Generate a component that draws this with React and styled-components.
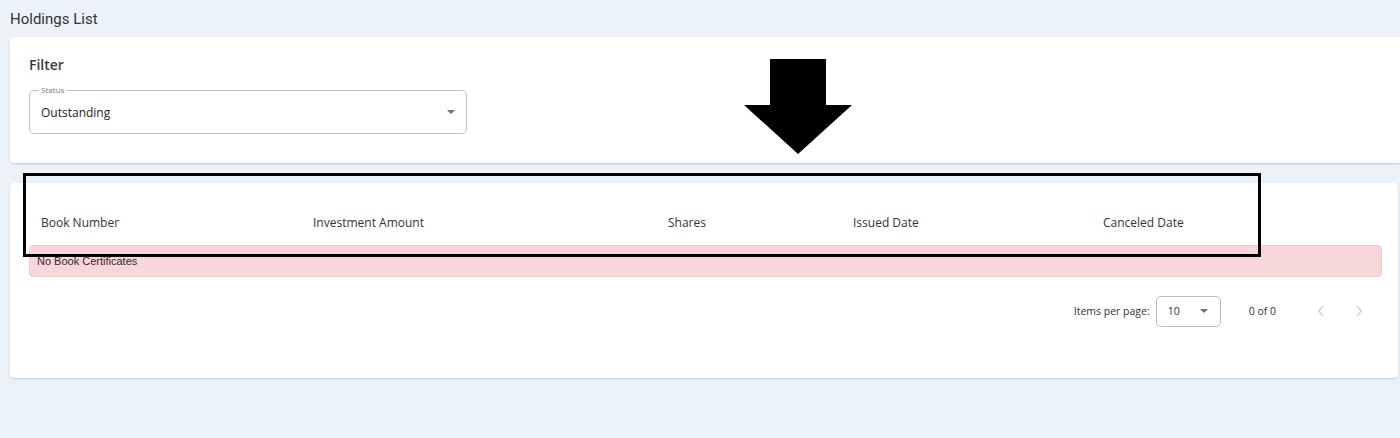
import React from "react";
import styled, { createGlobalStyle } from "styled-components";

const Global = createGlobalStyle`
  html, body { margin: 0; padding: 0; }
  body {
    background: #ecf3f8;
    font-family: "Open Sans", "Liberation Sans", sans-serif;
    color: #333;
  }
`;

const Page = styled.div`
  position: relative;
  width: 1400px;
  height: 438px;
  overflow: hidden;
  padding: 9px 2px 0 10px;
  box-sizing: border-box;
  display: flex;
  flex-direction: column;
`;

const PageTitle = styled.h1`
  margin: 0;
  font-family: Roboto, "Liberation Sans", sans-serif;
  font-weight: 400;
  font-size: 15px;
  line-height: 20px;
  color: #333;
  height: 28px;
`;

const Card = styled.section`
  background: #fff;
  border-radius: 4px;
  box-shadow: 0 1px 2px rgba(0, 0, 0, 0.18);
  padding: ${(p) => p.$pad};
  margin-bottom: 20px;
  margin-right: ${(p) => p.$mr || "0"};
  box-sizing: border-box;
  height: ${(p) => p.$h};
`;

const CardTitle = styled.h2`
  margin: 0 0 15px;
  font-size: 14px;
  font-weight: 600;
  line-height: 20px;
  color: #3a3a3a;
`;

const Field = styled.div`
  position: relative;
  width: 438px;
  height: 44px;
  border: 1px solid #bdbdbd;
  border-radius: 5px;
  box-sizing: border-box;
  display: flex;
  align-items: center;
  padding: 0 11px;
  justify-content: space-between;
`;

const FieldLabel = styled.span`
  position: absolute;
  top: -6px;
  left: 8px;
  padding: 0 3px;
  background: #fff;
  font-size: 8px;
  line-height: 10px;
  color: #777;
`;

const FieldValue = styled.span`
  font-size: 12px;
  color: #222;
  padding-top: 1px;
`;

const Caret = styled.span`
  width: 0;
  height: 0;
  border-left: 4px solid transparent;
  border-right: 4px solid transparent;
  border-top: 4px solid #707070;
`;

const cols = "272px 355px 185px 250px 1fr";

const HeaderRow = styled.div`
  display: grid;
  grid-template-columns: ${cols};
  height: 46px;
  align-items: center;
  padding-left: 12px;
`;

const HeaderCell = styled.div`
  font-size: 12px;
  color: #333;
`;

const Alert = styled.div`
  height: 32px;
  box-sizing: border-box;
  background: #f8d7da;
  border: 1px solid #f1c7cc;
  border-radius: 4px;
  display: flex;
  align-items: center;
  padding-left: 7px;
  font-family: "Liberation Sans", Arial, sans-serif;
  font-size: 11px;
  color: #3a2326;
`;

const Paginator = styled.div`
  height: 68px;
  display: flex;
  align-items: center;
  justify-content: flex-end;
  padding-right: 4px;
  font-size: 10.5px;
  color: #333;
`;

const PageSize = styled.div`
  width: 65px;
  height: 31px;
  box-sizing: border-box;
  border: 1px solid #bdbdbd;
  border-radius: 5px;
  margin: 0 28px 0 6px;
  display: flex;
  align-items: center;
  justify-content: space-between;
  padding: 0 12px 0 11px;
`;

const Range = styled.span`
  margin-right: 26px;
`;

const NavBtn = styled.button`
  border: 0;
  background: transparent;
  padding: 0;
  width: 38px;
  height: 30px;
  display: flex;
  align-items: center;
  justify-content: center;
  color: #d0d0d0;
`;

const Annotation = styled.div`
  position: absolute;
  left: 23px;
  top: 173px;
  width: 1238px;
  height: 84px;
  border: 3px solid #000;
  box-sizing: border-box;
  pointer-events: none;
`;

const ArrowWrap = styled.svg`
  position: absolute;
  left: 743px;
  top: 58px;
  pointer-events: none;
`;

const Chevron = ({ dir }) => (
  <svg width="8" height="12" viewBox="0 0 8 12">
    <path
      d={dir === "left" ? "M6 1 L1.5 6 L6 11" : "M2 1 L6.5 6 L2 11"}
      fill="none"
      stroke="currentColor"
      strokeWidth="1.3"
    />
  </svg>
);

export default function App() {
  const headers = ["Book Number", "Investment Amount", "Shares", "Issued Date", "Canceled Date"];
  return (
    <>
      <Global />
      <Page>
        <PageTitle>Holdings List</PageTitle>
        <Card $pad="18px 19px 28px" $h="126px" $mr="-4px">
          <CardTitle>Filter</CardTitle>
          <Field>
            <FieldLabel>Status</FieldLabel>
            <FieldValue>Outstanding</FieldValue>
            <Caret />
          </Field>
        </Card>
        <Card $pad="16px 16px 0 19px" $h="195px">
          <HeaderRow>
            {headers.map((h) => (
              <HeaderCell key={h}>{h}</HeaderCell>
            ))}
          </HeaderRow>
          <Alert>No Book Certificates</Alert>
          <Paginator>
            <span>Items per page:</span>
            <PageSize>
              <span>10</span>
              <Caret />
            </PageSize>
            <Range>0 of 0</Range>
            <NavBtn aria-label="Previous page">
              <Chevron dir="left" />
            </NavBtn>
            <NavBtn aria-label="Next page">
              <Chevron dir="right" />
            </NavBtn>
          </Paginator>
        </Card>
        <Annotation />
        <ArrowWrap width="110" height="97" viewBox="0 0 110 97">
          <polygon points="27,1 83,1 83,47 109,47 55,96 1,47 27,47" fill="#000" />
        </ArrowWrap>
      </Page>
    </>
  );
}
